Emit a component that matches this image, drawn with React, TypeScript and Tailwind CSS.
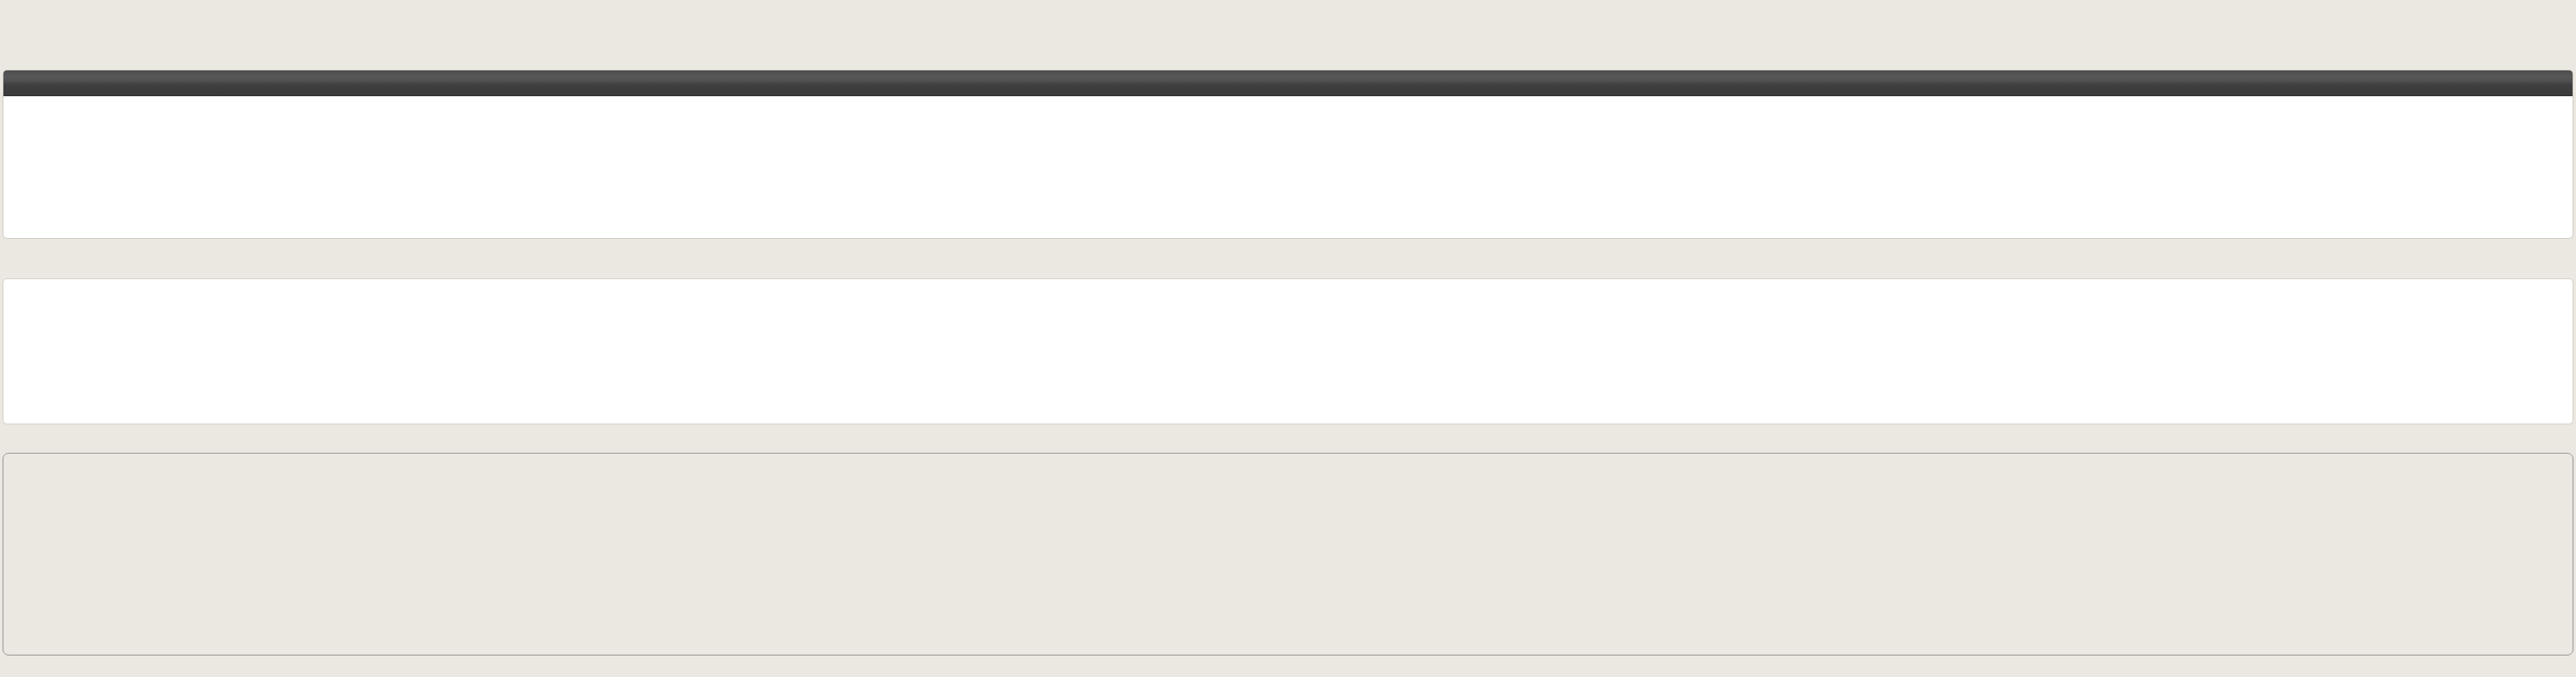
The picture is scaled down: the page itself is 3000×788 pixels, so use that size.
export default function App() {
  return (
    <main className="min-h-[788px] bg-[#ebe8e2] px-[3px] pt-[81px] font-['Liberation_Sans',sans-serif]">
      {/* top panel with dark title bar */}
      <section className="h-[197px] overflow-hidden rounded-[5px] border border-[#cfccc6] bg-white">
        <div className="h-[30px] border-b border-[#333] bg-[linear-gradient(#4b4b4b,#575757_20%,#525252_40%,#484848_48%,#3f3f3f_60%,#3a3a3a)]" />
      </section>

      {/* middle white panel */}
      <section className="mt-[46px] h-[170px] rounded-[5px] border border-[#d3d0ca] bg-white" />

      {/* bottom outlined panel */}
      <section className="mt-[33px] h-[236px] rounded-[7px] border-[1.5px] border-[#9a9794] bg-[#ebe8e2]" />
    </main>
  );
}
